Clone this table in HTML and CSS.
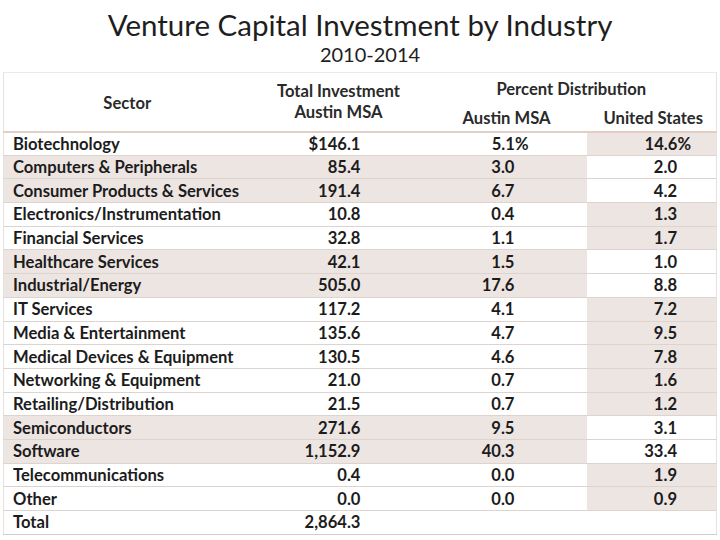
FILE: index.html
```html
<!DOCTYPE html>
<html>
<head>
<meta charset="utf-8">
<link rel="stylesheet" href="styles.css">
</head>
<body>
<div class="slide">
  <h1 class="title">Venture Capital Investment by Industry</h1>
  <div class="subtitle">2010-2014</div>
  <table class="vc">
    <colgroup>
      <col class="c1"><col class="c2"><col class="c3"><col class="c4">
    </colgroup>
    <thead>
      <tr class="h1">
        <th rowspan="2" class="hs">Sector</th>
        <th rowspan="2" class="ht">Total Investment<br>Austin MSA</th>
        <th colspan="2" class="hp">Percent Distribution</th>
      </tr>
      <tr class="h2">
        <th class="ha">Austin MSA</th>
        <th class="hu">United States</th>
      </tr>
    </thead>
    <tbody>
      <tr class="us"><td>Biotechnology</td><td class="n">$146.1</td><td class="p">5.1<span class="pc">%</span></td><td class="q">14.6<span class="pc">%</span></td></tr>
      <tr class="au"><td>Computers &amp; Peripherals</td><td class="n">85.4</td><td class="p">3.0</td><td class="q">2.0</td></tr>
      <tr class="au"><td>Consumer Products &amp; Services</td><td class="n">191.4</td><td class="p">6.7</td><td class="q">4.2</td></tr>
      <tr class="us"><td>Electronics/Instrumentation</td><td class="n">10.8</td><td class="p">0.4</td><td class="q">1.3</td></tr>
      <tr class="us"><td>Financial Services</td><td class="n">32.8</td><td class="p">1.1</td><td class="q">1.7</td></tr>
      <tr class="au"><td>Healthcare Services</td><td class="n">42.1</td><td class="p">1.5</td><td class="q">1.0</td></tr>
      <tr class="au"><td>Industrial/Energy</td><td class="n">505.0</td><td class="p">17.6</td><td class="q">8.8</td></tr>
      <tr class="us"><td>IT Services</td><td class="n">117.2</td><td class="p">4.1</td><td class="q">7.2</td></tr>
      <tr class="us"><td>Media &amp; Entertainment</td><td class="n">135.6</td><td class="p">4.7</td><td class="q">9.5</td></tr>
      <tr class="us"><td>Medical Devices &amp; Equipment</td><td class="n">130.5</td><td class="p">4.6</td><td class="q">7.8</td></tr>
      <tr class="us"><td>Networking &amp; Equipment</td><td class="n">21.0</td><td class="p">0.7</td><td class="q">1.6</td></tr>
      <tr class="us"><td>Retailing/Distribution</td><td class="n">21.5</td><td class="p">0.7</td><td class="q">1.2</td></tr>
      <tr class="au"><td>Semiconductors</td><td class="n">271.6</td><td class="p">9.5</td><td class="q">3.1</td></tr>
      <tr class="au"><td>Software</td><td class="n">1,152.9</td><td class="p">40.3</td><td class="q">33.4</td></tr>
      <tr class="us"><td>Telecommunications</td><td class="n">0.4</td><td class="p">0.0</td><td class="q">1.9</td></tr>
      <tr class="us"><td>Other</td><td class="n">0.0</td><td class="p">0.0</td><td class="q">0.9</td></tr>
      <tr class="tot"><td>Total</td><td class="n">2,864.3</td><td class="p"></td><td class="q"></td></tr>
    </tbody>
  </table>
</div>
</body>
</html>
```
FILE: styles.css
```css
html, body {
  margin: 0;
  padding: 0;
  background: #ffffff;
}
.slide {
  width: 720px;
  height: 540px;
  overflow: hidden;
  font-family: Lato, "Open Sans", sans-serif;
  color: #1c1c1c;
}
.title {
  margin: 0;
  padding-top: 6px;
  font-weight: 400;
  font-size: 29.5px;
  line-height: 38px;
  text-align: center;
  color: #1e1e1e;
}
.subtitle {
  font-size: 20px;
  line-height: 22px;
  margin-top: -1px;
  text-align: center;
  padding-left: 20px;
  color: #1e1e1e;
}
.vc {
  margin-top: 7px;
  margin-left: 3px;
  width: 713px;
  border-collapse: collapse;
  table-layout: fixed;
  border-left: 1px solid #e6e2e0;
  border-right: 1px solid #e6e2e0;
  border-top: 1px solid #eeeae8;
  font-size: 16.6px;
  font-weight: 700;
}
.c1 { width: 247px; }
.c2 { width: 176px; }
.c3 { width: 160px; }
.c4 { width: 130px; }
.vc th {
  font-weight: 700;
  font-size: 16.6px;
  color: #2a2a2a;
  padding: 0;
  text-align: center;
  border-bottom: 2px solid #e3cec3;
}
.vc thead tr.h1 th.hp { border-bottom: none; }
.h1 { height: 30px; }
.h2 { height: 29px; }
.hs { vertical-align: middle; padding-top: 2px !important; }
.ht { line-height: 21px; vertical-align: middle; padding-top: 1px !important; }
.hp { vertical-align: bottom; padding-bottom: 4px !important; }
.ha, .hu { vertical-align: middle; padding-top: 3px !important; }
.hu { padding-left: 4px !important; }
.vc tbody tr { height: 23.7px; }
.vc td {
  padding: 0;
  border-bottom: 1px solid #ddd3cf;
  white-space: nowrap;
  line-height: 20px;
}
.vc td:first-child { padding-left: 9px; }
.n { text-align: right; padding-right: 66px !important; }
.p { text-align: right; padding-right: 72px !important; }
.q { text-align: right; padding-right: 39px !important; }
.pc { margin-right: -14px; }
.au td { background: #ede5e2; }
.au td.q { background: #ffffff; }
.us td { background: #ffffff; }
.us td.q { background: #ede5e2; }
.tot td { background: #ffffff; border-bottom: 1px solid #d4cdca; }
```
